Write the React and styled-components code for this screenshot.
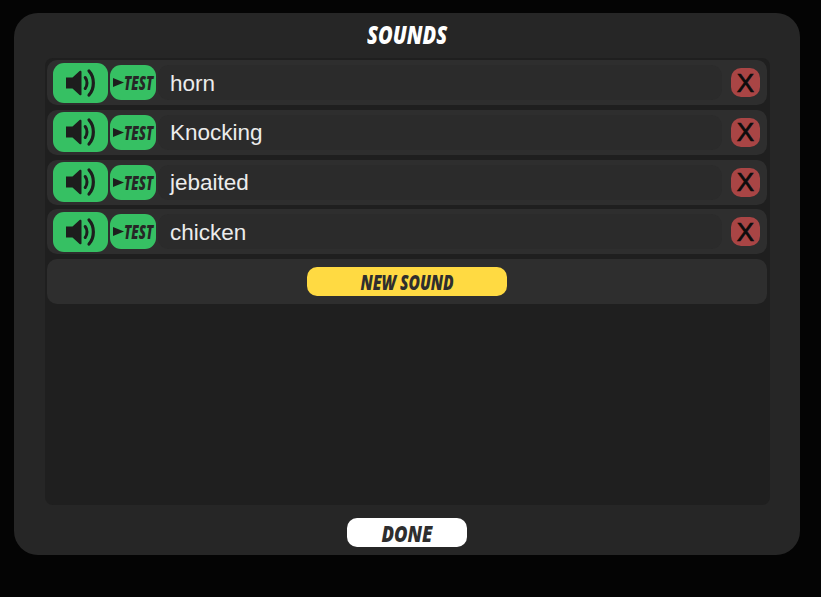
import React from "react";
import styled, { createGlobalStyle } from "styled-components";

const Global = createGlobalStyle`
  html, body { margin: 0; padding: 0; background: #040404; }
  #root { width: 821px; height: 597px; overflow: hidden; }
`;

const Page = styled.div`
  width: 821px;
  height: 597px;
  padding: 13px 21px 42px 14px;
  box-sizing: border-box;
`;

const Panel = styled.div`
  height: 100%;
  background: #262626;
  border-radius: 24px;
  display: flex;
  flex-direction: column;
  align-items: center;
`;

const Display = styled.span`
  display: inline-block;
  font-family: "Open Sans", "Liberation Sans", sans-serif;
  font-weight: 800;
  font-style: italic;
  white-space: nowrap;
  transform: scaleX(${(p) => p.$squeeze});
`;

const Title = styled.div`
  height: 45px;
  display: flex;
  align-items: center;
  justify-content: center;
  color: #fff;
  font-size: 25px;
  padding-bottom: 3px;
  box-sizing: border-box;
`;

const ListArea = styled.div`
  width: 725px;
  height: 447px;
  margin-left: 1px;
  background: #1f1f1f;
  border-radius: 8px;
  padding: 2px;
  box-sizing: border-box;
  display: flex;
  flex-direction: column;
  gap: 4.75px;
`;

const Row = styled.div`
  width: 720px;
  height: 45px;
  flex: none;
  background: #2e2e2e;
  border-radius: 10px;
  display: flex;
  align-items: center;
  padding: 0 7px 0 6px;
  box-sizing: border-box;
`;

const IconButton = styled.div`
  width: 55px;
  height: 40px;
  flex: none;
  background: #36c063;
  border-radius: 11px;
  display: flex;
  align-items: center;
  justify-content: center;
`;

const TestButton = styled.div`
  width: 46px;
  height: 35px;
  flex: none;
  margin-left: 2px;
  background: #36c063;
  border-radius: 11px;
  display: flex;
  align-items: center;
  color: #262626;
  font-size: 20px;
  padding-left: 3px;
  box-sizing: border-box;
  overflow: hidden;
`;

const TestLabel = styled(Display)`
  transform-origin: left center;
  margin-left: 0;
  width: 31px;
`;

const NameField = styled.div`
  flex: 1;
  height: 35px;
  margin: 0 9px 0 2px;
  padding: 2px 0 0 12px;
  background: #2b2b2b;
  border-radius: 11px;
  display: flex;
  align-items: center;
  box-sizing: border-box;
  color: #ececec;
  font-family: "Liberation Sans", Arial, sans-serif;
  font-size: 22.5px;
`;

const DeleteButton = styled.div`
  width: 29px;
  height: 29px;
  flex: none;
  background: #a94545;
  border-radius: 10px;
  display: flex;
  align-items: center;
  justify-content: center;
  color: #0c0c0c;
  font-family: "Liberation Sans", Arial, sans-serif;
  font-size: 26px;
  line-height: 1;
  -webkit-text-stroke: 0.7px #0c0c0c;
`;

const NewRow = styled(Row)`
  justify-content: center;
  padding: 0;
`;

const Pill = styled.div`
  width: ${(p) => p.$width}px;
  height: 29px;
  background: ${(p) => p.$bg};
  border-radius: 10px;
  display: flex;
  align-items: center;
  justify-content: center;
  color: #2e2e2e;
  font-size: ${(p) => p.$size}px;
`;

const Footer = styled.div`
  flex: 1;
  display: flex;
  align-items: flex-start;
  justify-content: center;
  padding-top: 13px;
`;

const SpeakerIcon = () => (
  <svg width="32" height="32" viewBox="0 0 32 32" aria-hidden="true">
    <path d="M1 10.5h6.5L14.6 4c.8-.7 1.9-.2 1.9.8v22.4c0 1-1.1 1.5-1.9.8L7.5 21.5H1z" fill="#1d1d1d" />
    <path d="M20.2 10.5c2.4 3 2.4 8 0 11" fill="none" stroke="#1d1d1d" strokeWidth="3" strokeLinecap="round" />
    <path d="M24 4c5.8 6.2 5.8 17.8 0 24" fill="none" stroke="#1d1d1d" strokeWidth="3.2" strokeLinecap="round" />
  </svg>
);

const PlayIcon = () => (
  <svg width="11" height="9" viewBox="0 0 11 9" aria-hidden="true" style={{ flex: "none" }}>
    <path d="M0 0l11 4.5L0 9z" fill="#1d1d1d" />
  </svg>
);

const sounds = ["horn", "Knocking", "jebaited", "chicken"];

export default function App() {
  return (
    <>
      <Global />
      <Page>
        <Panel>
          <Title>
            <Display $squeeze={0.8}>SOUNDS</Display>
          </Title>
          <ListArea>
            {sounds.map((name) => (
              <Row key={name}>
                <IconButton>
                  <SpeakerIcon />
                </IconButton>
                <TestButton>
                  <PlayIcon />
                  <TestLabel $squeeze={0.66}>TEST</TestLabel>
                </TestButton>
                <NameField>{name}</NameField>
                <DeleteButton>X</DeleteButton>
              </Row>
            ))}
            <NewRow>
              <Pill $width={200} $bg="#ffda42" $size={21}>
                <Display $squeeze={0.74}>NEW SOUND</Display>
              </Pill>
            </NewRow>
          </ListArea>
          <Footer>
            <Pill $width={120} $bg="#ffffff" $size={23}>
              <Display $squeeze={0.8}>DONE</Display>
            </Pill>
          </Footer>
        </Panel>
      </Page>
    </>
  );
}
